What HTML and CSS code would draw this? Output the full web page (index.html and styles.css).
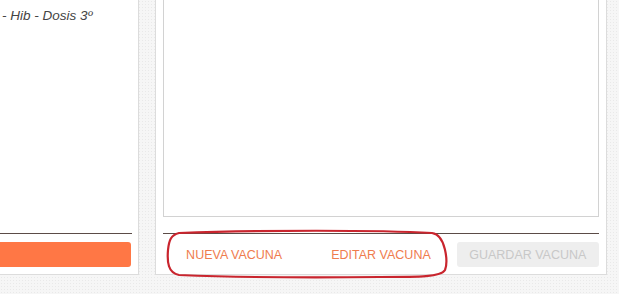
FILE: index.html
```html
<!DOCTYPE html>
<html lang="es">

<head>
  <meta charset="UTF-8">
  <meta name="viewport" content="width=device-width, initial-scale=1.0">
  <title>Vacunas</title>
  <link rel="stylesheet" href="styles.css">
</head>

<body>
<div class="vac_page">
  <div class="vac_panel vac_list">
    <div class="vac_list_body">
      <p class="vac_item">- Hib - Dosis 3º</p>
    </div>
    <div class="vac_rule"></div>
    <button class="vac_btn vac_btn_main"></button>
  </div>
  <div class="vac_panel vac_detail">
    <div class="vac_box"></div>
    <div class="vac_rule"></div>
    <div class="vac_actions">
      <button class="vac_btn vac_btn_link">NUEVA VACUNA</button>
      <button class="vac_btn vac_btn_link">EDITAR VACUNA</button>
      <button class="vac_btn vac_btn_off" disabled>GUARDAR VACUNA</button>
    </div>
  </div>
</div>
<!-- marca roja sobre los botones -->
<svg class="vac_mark" width="619" height="294" viewBox="0 0 619 294">
  <path d="M179 233 C260 230 380 230 432 233 C446 235 448 262 445 270 C441 277 420 277 380 277 C300 278 230 277 179 275 C168 273 167 262 168 250 C169 240 171 235 179 233 Z"
        fill="none" stroke="#c9252e" stroke-width="2.2" stroke-linejoin="round"/>
</svg>
</body>

</html>
```

FILE: styles.css
```css
body,
p,
button {
  padding: 0;
  margin: 0;
  font-family: 'Liberation Sans', Arial, sans-serif;
}

body {
  width: 619px;
  height: 294px;
  overflow: hidden;
  position: relative;
  background-color: #f6f6f6;
  background-image: radial-gradient(#e9e9e9 0.8px, transparent 1px);
  background-size: 3px 3px;
}

.vac_page {
  display: flex;
  align-items: flex-start;
  gap: 16px;
  margin-left: -60px;
  margin-top: -100px;
}

.vac_panel {
  box-sizing: border-box;
  height: 375px;
  background: #fff;
  border: 1px solid #dcdcdc;
  display: flex;
  flex-direction: column;
  padding: 0 7px 7px;
}

.vac_list {
  width: 199px;
}

.vac_detail {
  width: 452px;
}

.vac_list_body {
  flex: 1;
  padding: 107px 0 0 54px;
}

.vac_item {
  font-style: italic;
  font-size: 13.5px;
  color: #444;
}

.vac_box {
  flex: 1;
  border: 1px solid #d2d2d2;
}

.vac_rule {
  height: 1px;
  background: #5b4c47;
  margin: 16px 0 8px;
}

.vac_list .vac_rule {
  margin-right: -1px;
}

.vac_btn {
  height: 25px;
  border: 0;
  border-radius: 3px;
  font-size: 12.5px;
  cursor: pointer;
}

.vac_btn_main {
  background: #ff7745;
}

.vac_actions {
  display: flex;
  gap: 4.5px;
}

.vac_actions .vac_btn {
  flex: 1;
}

.vac_btn_link {
  background: transparent;
  color: #ef7c4e;
}

.vac_btn_off {
  background: #eeeeee;
  color: #c8c8c8;
}

.vac_mark {
  position: absolute;
  left: 0;
  top: 0;
}
```
